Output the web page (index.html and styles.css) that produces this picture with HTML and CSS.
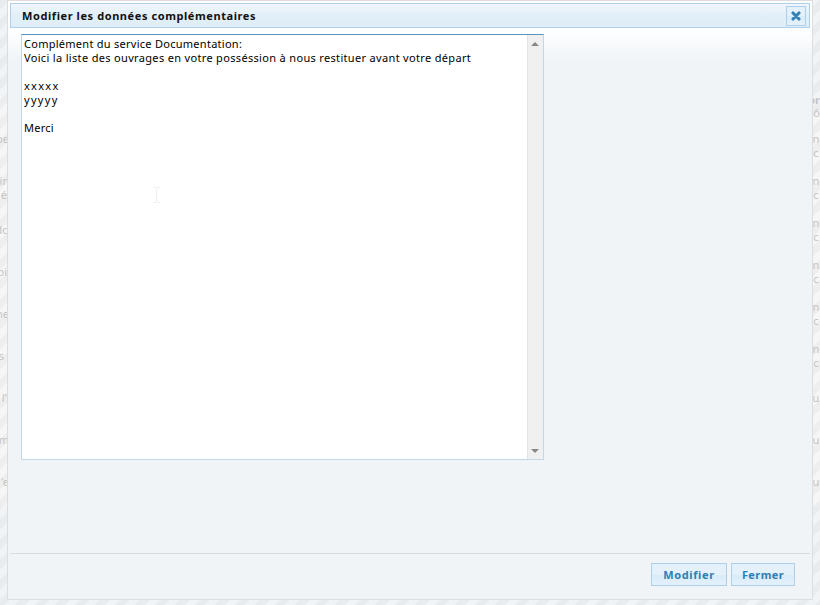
FILE: index.html
```html
<!DOCTYPE html>
<html lang="fr">
<head>
<meta charset="utf-8">
<title>Modifier les données complémentaires</title>
<link rel="stylesheet" href="styles.css">
</head>
<body>
<div class="backdrop">
  <div class="column column-left">
    <p class="start cut">pe</p><p class="start">lir<br>é</p><p class="cut">do</p><p>oi</p><p class="cut">ne</p><p>s&nbsp;</p><p>l'</p><p class="cut">m</p><p class="cut">'e</p>
  </div>
  <div class="column column-right">
    <b>or</b><span>ô</span>
    <p>n<br>c</p><p>n<br>c</p><p>n<br>c</p><p>n<br>c</p><p>n<br>c</p><p>n<br>c</p><p class="single">u</p><p class="single">u</p><p class="single">u</p>
  </div>
</div>
<section class="dialog">
  <header class="titlebar">
    <h1>Modifier les données complémentaires</h1>
    <button class="close" aria-label="Fermer la fenêtre"><svg width="10" height="10" viewBox="0 0 10 10"><path d="M2 2L8 8M8 2L2 8" stroke="#3580b5" stroke-width="3.1" stroke-linecap="round"/></svg></button>
  </header>
  <main class="content">
    <div class="editor">
      <div class="text"><div class="first">Complément du service Documentation:</div><div class="second">Voici la liste des ouvrages en votre posséssion à nous restituer avant votre départ</div><br><div class="letters">xxxxx</div><div class="letters">yyyyy</div><br><div class="first">Merci</div>
        <svg class="caret" width="7" height="16" viewBox="0 0 7 16"><path d="M0 .5h3M4 .5h3M3.5 1v14M0 15.5h3M4 15.5h3" stroke="#eeeeee"/></svg>
      </div>
      <div class="scrollbar"><i class="up"></i><i class="down"></i></div>
    </div>
  </main>
  <footer class="actions"><button class="btn modify">Modifier</button><button class="btn shut">Fermer</button></footer>
</section>
</body>
</html>
```
FILE: styles.css
```css
* { box-sizing: border-box; }
body { margin: 0; width: 820px; height: 605px; overflow: hidden; position: relative; font: 11px/14px "Noto Sans", "Open Sans", sans-serif; }
.backdrop {
  height: 605px; display: flex; justify-content: space-between; color: #c4c4c4;
  background: repeating-linear-gradient(135deg, rgba(0,0,0,.032) 0 7.071px, transparent 7.071px 14.142px), linear-gradient(#f0f4f7 0 85px, #f6f6f6 115px 500px, #f0f4f7 510px);
}
.column { width: 7px; overflow: hidden; display: flex; flex-direction: column; align-items: flex-end; padding-top: 132px; }
.column-right { padding-top: 93px; }
.column b { line-height: 13px; }
.column span { height: 26px; line-height: 13px; }
.column p { margin: 0; height: 42px; flex: none; padding-top: 7px; text-align: right; }
.column-left p.start:first-child { padding-top: 7px; margin-top: -7px; height: 49px; }
.column p.start { padding-top: 0; }
.column p.cut { margin-right: -2px; }
.column-right p { padding-top: 0; text-align: center; width: 8px; }
.column-right p.single { padding-top: 7px; }
.dialog {
  position: absolute; left: 7px; top: 0; width: 806px; height: 600px; padding: 2px;
  display: flex; flex-direction: column; border: 1px solid #dddddd;
  background: linear-gradient(#fff 0, #fcfdfe 35px, #f0f4f7 60px);
}
.titlebar {
  height: 25px; flex: none; display: flex; align-items: center; justify-content: space-between;
  padding: 0 3px 0 11px; border: 1px solid #aed0ea; background: linear-gradient(#f0f6fc, #e2eff8 50%, #deedf7);
}
.titlebar h1 { margin: 0; font-size: 11px; font-weight: 700; letter-spacing: .58px; color: #111; }
.close { display: flex; align-items: center; justify-content: center; width: 20px; height: 20px; padding: 0; border: 1px solid #aed0ea; background: linear-gradient(#e4f1fb 50%, #d7ebf9 50%, #e4f1fb); }
.content { height: 525px; flex: none; padding: 6px 11px; }
.editor { width: 523px; height: 426px; display: flex; background: #fff; border: 1px solid #c0d8e8; border-top-color: #5794bf; }
.text { flex: 1; position: relative; padding: 2px; color: #000; white-space: nowrap; }
.first { letter-spacing: .27px; }
.second { letter-spacing: .33px; }
.letters { letter-spacing: 1.3px; }
.caret { position: absolute; left: 131px; top: 152px; }
.scrollbar { width: 16px; display: flex; flex-direction: column; justify-content: space-between; align-items: flex-start; padding: 7px 0 6px 3px; background: #f0f0f0; border-left: 1px solid #e3e3e3; }
.up, .down { border: 4px solid transparent; border-top: 0; border-bottom: 4px solid #888; }
.down { border-bottom: 0; border-top: 4px solid #888; }
.actions { height: 44px; display: flex; align-items: flex-start; justify-content: flex-end; gap: 4px; padding: 9px 15px 0 0; border-top: 1px solid #d8dde1; }
.btn { height: 23px; padding: 0; border: 1px solid #aed0ea; color: #2e7fb3; font: bold 11px/21px "Noto Sans", sans-serif; letter-spacing: .6px; background: linear-gradient(#e4f1fb 50%, #d7ebf9 50%, #e4f1fb); }
.modify { width: 76px; }
.shut { width: 64px; letter-spacing: .4px; }
```
